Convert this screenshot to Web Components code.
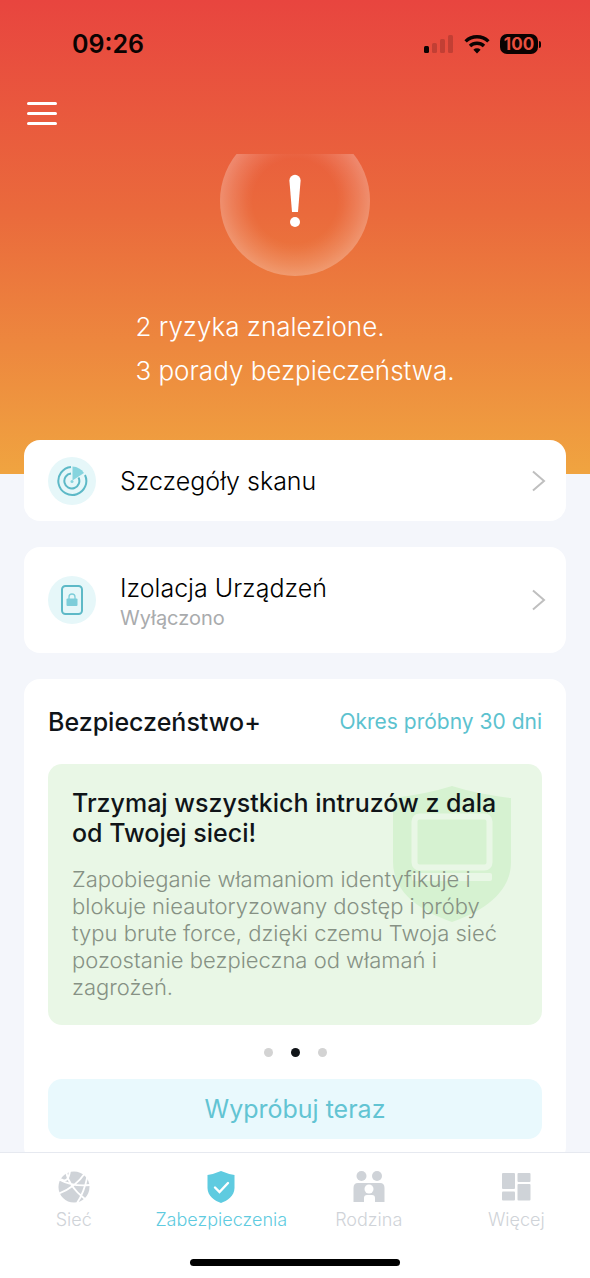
<!DOCTYPE html>
<html lang="pl">
<head>
<meta charset="utf-8">
<meta name="viewport" content="width=device-width, initial-scale=1">
<title>Zabezpieczenia</title>
<style>
  body { margin: 0; font-family: Inter, "Liberation Sans", sans-serif; color: #101418; background: #fff; }
</style>
</head>
<body>
<security-app></security-app>
<script>
const define = (name, html) => {
  const template = document.createElement('template');
  template.innerHTML = html;
  customElements.define(name, class extends HTMLElement {
    constructor() {
      super();
      this.attachShadow({ mode: 'open' }).append(template.content.cloneNode(true));
    }
  });
};

define('status-bar', `
<style>
  :host { display: flex; align-items: center; justify-content: space-between; height: 88px; padding: 0 49px 0 72px; color: #0b0302; box-sizing: border-box; }
  time { font-size: 25px; line-height: 32px; font-weight: 600; }
  .right { display: flex; align-items: center; gap: 10px; }
  svg { display: block; }
  .battery { display: flex; align-items: center; gap: 1px; }
  .level { width: 38px; height: 20px; border-radius: 7px; background: #0b0302; color: #e9503f; font-size: 17px; line-height: 20px; font-weight: 700; text-align: center; }
  .tip { width: 2px; height: 7px; border-radius: 0 2px 2px 0; background: #0b0302; }
</style>
<time>09:26</time>
<div class="right">
  <svg width="30" height="20" viewBox="0 0 30 20" aria-hidden="true">
    <rect x="0" y="12" width="5" height="7" rx="1.5" fill="#0b0302"/>
    <g fill="#c23f34"><rect x="8" y="9" width="5" height="10" rx="1.5"/><rect x="16" y="5" width="5" height="14" rx="1.5"/><rect x="24" y="1" width="5" height="18" rx="1.5"/></g>
  </svg>
  <svg width="26" height="20" viewBox="0 0 26 20" fill="none" stroke="#0b0302" stroke-width="3.4" aria-hidden="true">
    <path d="M1.6 7.4a16.4 16.4 0 0 1 22.8 0M6 12a10.2 10.2 0 0 1 14 0"/>
    <path d="M13 19.4l-3.6-3.6a5.2 5.2 0 0 1 7.2 0z" fill="#0b0302" stroke="none"/>
  </svg>
  <div class="battery"><div class="level">100</div><div class="tip"></div></div>
</div>`);

define('nav-header', `
<style>
  :host { display: flex; align-items: center; height: 50px; padding: 0 27px 16px; }
  button { display: block; border: 0; padding: 0; background: none; color: #fff; }
  svg { display: block; }
</style>
<button type="button" aria-label="Menu"><svg width="30" height="26" viewBox="0 0 30 26" stroke="#fff" stroke-width="3" stroke-linecap="round"><path d="M1.5 3.5h27M1.5 13.5h27M1.5 23.5h27"/></svg></button>`);

define('risk-summary', `
<style>
  :host { display: flex; flex-direction: column; align-items: center; overflow: hidden; padding-bottom: 81px; color: #fff; }
  .ring { display: flex; align-items: center; justify-content: center; width: 150px; height: 150px; margin: -28px 0 29px; border-radius: 50%; background: radial-gradient(closest-side, rgba(255,255,255,0) 56%, rgba(255,255,255,.03) 64%, rgba(255,255,255,.15) 84%, rgba(255,255,255,.26) 100%); }
  ul { list-style: none; margin: 0; padding: 0; font-size: 26px; line-height: 44px; font-weight: 300; }
</style>
<div class="ring"><svg width="14" height="54" viewBox="0 0 14 54" fill="#fff" aria-hidden="true"><path d="M1.4 6.4a5.6 5.6 0 0 1 11.2 0L10 38H4z"/><circle cx="7" cy="48" r="5"/></svg></div>
<ul><slot></slot></ul>`);

define('link-card', `
<style>
  :host { display: block; }
  a { display: flex; align-items: center; gap: 24px; padding: 17px 20px 16px 24px; border-radius: 16px; background: #fff; color: #101418; text-decoration: none; }
  .icon { flex: none; display: flex; align-items: center; justify-content: center; width: 48px; height: 48px; border-radius: 50%; background: #e6f7f9; }
  .text { flex: 1; display: flex; flex-direction: column; }
  .title { font-size: 25px; line-height: 36px; font-weight: 300; color: #000; }
  ::slotted([slot="note"]) { font-size: 20px; line-height: 24px; font-weight: 400; color: #a9abad; }
  :host([tall]) a { padding-top: 23px; padding-bottom: 23px; }
  svg { display: block; }
</style>
<a href="#"><span class="icon"><slot name="icon"></slot></span>
<span class="text"><span class="title"><slot></slot></span><slot name="note"></slot></span>
<svg width="14" height="24" viewBox="0 0 14 24" fill="none" stroke="#bfbfbf" stroke-width="2" aria-hidden="true"><path d="M1 2.500L12 12L1 21.500"/></svg></a>`);

define('promo-slide', `
<style>
  :host { display: block; position: relative; padding: 24px; border-radius: 14px; background: #e9f7e6; }
  svg { position: absolute; top: 22px; right: 31px; }
  .text { position: relative; }
  h3 { margin: 0 0 18px; font-size: 25px; line-height: 30px; font-weight: 500; color: #101418; }
  p { margin: 0; font-size: 22px; line-height: 27px; font-weight: 300; color: #869184; }
</style>
<svg width="118" height="136" viewBox="0 0 118 136" aria-hidden="true">
  <path d="M59 0Q84 8 118 12V76C118 108 88 126 59 136C30 126 0 108 0 76V12Q34 8 59 0Z" fill="#d6f2d1"/>
  <rect x="21.500" y="30.500" width="75" height="51" rx="5" fill="none" stroke="#e9f7e6" stroke-width="6"/>
  <rect x="19" y="87" width="80" height="8" rx="2" fill="#e9f7e6"/>
</svg>
<div class="text"><h3><slot name="title"></slot></h3><p><slot></slot></p></div>`);

define('page-dots', `
<style>
  :host { display: flex; align-items: center; justify-content: center; gap: 18px; height: 54px; }
  i { width: 9px; height: 9px; border-radius: 50%; background: #d3d3d3; }
  .on { background: #101418; }
</style><i></i><i class="on"></i><i></i>`);

define('plus-card', `
<style>
  :host { display: block; padding: 24px; border-radius: 16px; background: #fff; }
  header { display: flex; align-items: center; justify-content: space-between; height: 37px; margin-bottom: 24px; }
  h2 { margin: 0; font-size: 25px; line-height: 36px; font-weight: 500; }
  a { font-size: 21px; line-height: 36px; color: #5cc2cf; text-decoration: none; }
  button { display: block; width: 100%; height: 60px; border: 0; border-radius: 14px; background: #e9f9fd; color: #62c4d3; font: inherit; font-size: 25px; }
</style>
<header><h2>Bezpieczeństwo+</h2><a href="#">Okres próbny 30 dni</a></header>
<slot></slot>
<page-dots></page-dots>
<button type="button">Wypróbuj teraz</button>`);

define('tab-item', `
<style>
  :host { flex: 1; display: block; color: #cfd3d8; }
  a { display: flex; flex-direction: column; align-items: center; gap: 4px; color: inherit; text-decoration: none; font-size: 18px; line-height: 26px; font-weight: 300; }
  :host([active]) { color: #5fcbe0; }
</style>
<a href="#"><slot name="icon"></slot><span><slot></slot></span></a>`);

define('tab-bar', `
<style>
  :host { display: flex; flex-direction: column; justify-content: space-between; align-items: center; height: 126px; padding: 18px 0 12px; box-sizing: border-box; border-top: 1px solid #e6e9f0; background: #fff; }
  nav { display: flex; align-self: stretch; }
  svg { display: block; }
  .home { width: 210px; height: 7px; border-radius: 4px; background: #000; }
</style>
<nav>
  <tab-item><svg slot="icon" width="32" height="32" viewBox="0 0 32 32"><circle cx="16" cy="16" r="15.500" fill="#cfd3d8"/><path d="M8 0Q10 15 27 28M1 8.500Q15 16 32 14M0 23Q18 16 27 2M19 32Q26 22 29.500 5M3 8Q10 13 12 0" fill="none" stroke="#fff" stroke-width="1.800"/></svg>Sieć</tab-item>
  <tab-item active><svg slot="icon" width="32" height="32" viewBox="0 0 32 32"><path d="M16 0Q23 3 29.500 4V17C29.500 25 22 30 16 32C10 30 2.500 25 2.500 17V4Q9 3 16 0Z" fill="#5fcbe0"/><path d="M10 16.500L14.500 21L23 12" fill="none" stroke="#fff" stroke-width="2.400" stroke-linecap="round"/></svg>Zabezpieczenia</tab-item>
  <tab-item><svg slot="icon" width="32" height="32" viewBox="0 0 32 32" fill="#cfd3d8"><circle cx="8.500" cy="5" r="5"/><circle cx="24" cy="5" r="5"/><path d="M5 12H27Q31.500 12 31.500 17V31H22V27Q22 24 19 24H14Q11 24 11 27V31H.5V17Q.5 12 5 12Z"/><circle cx="16" cy="18" r="4.500" fill="#fff"/></svg>Rodzina</tab-item>
  <tab-item><svg slot="icon" width="32" height="32" viewBox="0 0 32 32" fill="#cfd3d8"><rect x="2" y="2" width="13" height="16" rx="1"/><rect x="17.500" y="2" width="13" height="9" rx="1"/><rect x="2" y="20.500" width="13" height="9" rx="1"/><rect x="17.500" y="13" width="13" height="16.500" rx="1"/></svg>Więcej</tab-item>
</nav>
<div class="home"></div>`);

define('security-app', `
<style>
  :host { display: flex; flex-direction: column; height: 100vh; }
  .scroll { flex: 1; min-height: 0; overflow-y: auto; scrollbar-width: none; background: #f4f6fb; }
  .hero { background: linear-gradient(#e8453f, #ea6a3c 45%, #f0a440); }
  main { display: flex; flex-direction: column; gap: 26px; margin-top: -34px; padding: 0 24px 24px; }
  svg { display: block; }
</style>
<div class="scroll">
  <div class="hero">
    <status-bar></status-bar>
    <nav-header></nav-header>
    <risk-summary><li>2 ryzyka znalezione.</li><li>3 porady bezpieczeństwa.</li></risk-summary>
  </div>
  <main>
    <link-card>
      <svg slot="icon" width="32" height="32" viewBox="0 0 32 32" fill="none" stroke="#5db9c7" stroke-width="2"><path d="M15 2A14 14 0 1 0 29 10M15 8.500A7.500 7.500 0 1 0 22.500 12.500"/><path d="M16.500 15.500V1.500Q24 2 28 8Z" fill="#86d4de" stroke="none"/><circle cx="16" cy="16.500" r="1.500" fill="#86d4de" stroke="none"/></svg>
      Szczegóły skanu
    </link-card>
    <link-card tall>
      <svg slot="icon" width="32" height="32" viewBox="0 0 32 32" fill="none"><rect x="6" y="2" width="20" height="28" rx="3.500" stroke="#5db9c7" stroke-width="2"/><rect x="10.500" y="14.500" width="11" height="7.500" rx="1" fill="#7dcdd9"/><path d="M13 15V13a3 3 0 0 1 6 0V15" stroke="#7dcdd9" stroke-width="1.300"/></svg>
      Izolacja Urządzeń<span slot="note">Wyłączono</span>
    </link-card>
    <plus-card>
      <promo-slide><span slot="title">Trzymaj wszystkich intruzów z dala od Twojej sieci!</span>Zapobieganie włamaniom identyfikuje i blokuje nieautoryzowany dostęp i próby typu brute force, dzięki czemu Twoja sieć pozostanie bezpieczna od włamań i zagrożeń.</promo-slide>
    </plus-card>
  </main>
</div>
<tab-bar></tab-bar>`);
</script>
</body>
</html>
